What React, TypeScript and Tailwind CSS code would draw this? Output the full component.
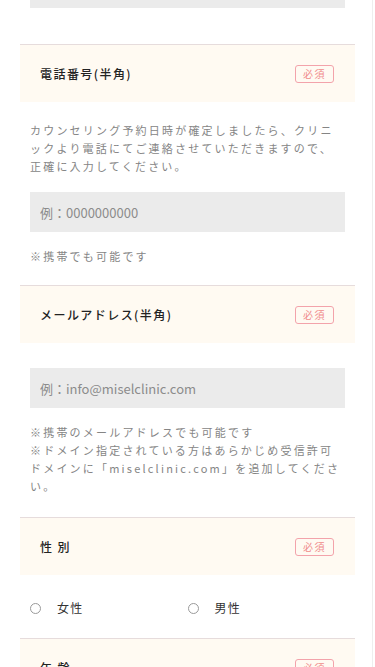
import React from "react";

const font = { fontFamily: '"Noto Sans CJK JP", "Noto Sans", sans-serif' };

function Badge() {
  return (
    <span className="flex h-[18px] w-[39px] items-center justify-center rounded-[3px] border border-[#f3a3ab] text-[10px] leading-none tracking-[0.15em] text-[#f08c8c]">
      必須
    </span>
  );
}

function Header({ title }: { title: string }) {
  return (
    <div className="flex h-[57px] items-center justify-between bg-[#fffaf2] pl-[20px] pr-[21px]">
      <span className="text-[12px] font-medium tracking-[0.12em] text-[#222222]">{title}</span>
      <Badge />
    </div>
  );
}

function Field({ placeholder, className }: { placeholder: string; className: string }) {
  return (
    <input
      readOnly
      placeholder={placeholder}
      className={
        "block h-[40px] w-full bg-[#ebebeb] px-[10px] text-[13px] outline-none placeholder:text-[#8c8c8c] " + className
      }
      style={font}
    />
  );
}

const note = "text-[11px] leading-[18px] tracking-[0.2em] text-[#858585]";
const sec = "ml-[20px] w-[335px] border-t border-[#e6dcdc]";

export default function App() {
  return (
    <div className="min-h-screen w-[373px] border-r border-[#eeeeee] bg-white" style={font}>
      <div className="ml-[30px] h-[8px] w-[315px] bg-[#ebebeb]" />

      <section className={sec + " mt-[36px]"}>
        <Header title="電話番号(半角)" />
        <div className="px-[10px] pb-[20px] pt-[19px]">
          <p className={note}>
            カウンセリング予約日時が確定しましたら、クリニックより電話にてご連絡させていただきますので、正確に入力してください。
          </p>
          <Field placeholder="例：0000000000" className="mt-[17px]" />
          <p className={note + " mt-[15px]"}>※携帯でも可能です</p>
        </div>
      </section>

      <section className={sec}>
        <Header title="メールアドレス(半角)" />
        <div className="px-[10px] pb-[22px] pt-[25px]">
          <Field placeholder="例：info@miselclinic.com" className="" />
          <p className={note + " mt-[15px]"}>
            ※携帯のメールアドレスでも可能です
            <br />
            ※ドメイン指定されている方はあらかじめ受信許可ドメインに「miselclinic.com」を追加してください。
          </p>
        </div>
      </section>

      <section className={sec}>
        <Header title="性 別" />
        <div className="grid grid-cols-2 px-[10px] pb-[21px] pt-[24px]">
          {["女性", "男性"].map((l) => (
            <label key={l} className="flex h-[18px] items-center">
              <span className="h-[11px] w-[11px] rounded-full border border-[#9a9a9a] bg-white" />
              <span className="ml-[16px] text-[12px] tracking-[0.1em] text-[#333333]">{l}</span>
            </label>
          ))}
        </div>
      </section>

      <section className={sec}>
        <Header title="年 齢" />
        <div className="h-[80px]" />
      </section>
    </div>
  );
}
